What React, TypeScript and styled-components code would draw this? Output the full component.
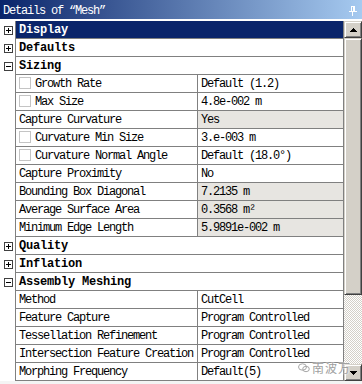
import React from "react";
import styled, { createGlobalStyle } from "styled-components";

type Item =
  | { kind: "cat"; label: string; open?: boolean; selected?: boolean }
  | { kind: "prop"; label: string; value: string; check?: boolean; readOnly?: boolean };

const items: Item[] = [
  { kind: "cat", label: "Display", selected: true },
  { kind: "cat", label: "Defaults" },
  { kind: "cat", label: "Sizing", open: true },
  { kind: "prop", label: "Growth Rate", value: "Default (1.2)", check: true },
  { kind: "prop", label: "Max Size", value: "4.8e-002 m", check: true },
  { kind: "prop", label: "Capture Curvature", value: "Yes", readOnly: true },
  { kind: "prop", label: "Curvature Min Size", value: "3.e-003 m", check: true },
  { kind: "prop", label: "Curvature Normal Angle", value: "Default (18.0°)", check: true },
  { kind: "prop", label: "Capture Proximity", value: "No" },
  { kind: "prop", label: "Bounding Box Diagonal", value: "7.2135 m", readOnly: true },
  { kind: "prop", label: "Average Surface Area", value: "0.3568 m²", readOnly: true },
  { kind: "prop", label: "Minimum Edge Length", value: "5.9891e-002 m", readOnly: true },
  { kind: "cat", label: "Quality" },
  { kind: "cat", label: "Inflation" },
  { kind: "cat", label: "Assembly Meshing", open: true },
  { kind: "prop", label: "Method", value: "CutCell" },
  { kind: "prop", label: "Feature Capture", value: "Program Controlled" },
  { kind: "prop", label: "Tessellation Refinement", value: "Program Controlled" },
  { kind: "prop", label: "Intersection Feature Creation", value: "Program Controlled" },
  { kind: "prop", label: "Morphing Frequency", value: "Default(5)" },
];

const GlobalStyle = createGlobalStyle`
  html, body {
    margin: 0;
    padding: 0;
    background: #ffffff;
  }
`;

const ExpandBox = ({ open }: { open?: boolean }) => (
  <svg width="9" height="9" viewBox="0 0 9 9">
    <rect x="0.5" y="0.5" width="8" height="8" fill="#fff" stroke="#404040" />
    <rect x="2" y="4" width="5" height="1" fill="#000" />
    {!open && <rect x="4" y="2" width="1" height="5" fill="#000" />}
  </svg>
);

const PinIcon = () => (
  <svg width="8" height="10" viewBox="0 0 8 10" shapeRendering="crispEdges">
    <rect x="2" y="0" width="1" height="5" fill="#fff" />
    <rect x="2" y="0" width="4" height="1" fill="#fff" />
    <rect x="4" y="0" width="2" height="5" fill="#fff" />
    <rect x="0" y="5" width="8" height="1" fill="#fff" />
    <rect x="3" y="6" width="1" height="4" fill="#fff" />
  </svg>
);

const Arrow = ({ down }: { down?: boolean }) => (
  <svg width="7" height="4" viewBox="0 0 7 4" shapeRendering="crispEdges">
    <polygon points={down ? "0,0 7,0 3.5,4" : "3.5,0 7,4 0,4"} fill="#000" />
  </svg>
);

export default function App() {
  return (
    <>
      <GlobalStyle />
      <Panel>
        <TitleBar>
          <span>Details of “Mesh”</span>
          <PinIcon />
        </TitleBar>
        <Body>
          <Grid>
            {items.map((it) => (
              <Row key={it.label}>
                <Gutter>{it.kind === "cat" && <ExpandBox open={it.open} />}</Gutter>
                {it.kind === "cat" ? (
                  <CategoryCell $selected={it.selected}>{it.label}</CategoryCell>
                ) : (
                  <>
                    <NameCell>
                      {it.check && <CheckBox />}
                      {it.label}
                    </NameCell>
                    <ValueCell $readOnly={it.readOnly}>{it.value}</ValueCell>
                  </>
                )}
              </Row>
            ))}
          </Grid>
          <ScrollBar>
            <ScrollButton>
              <Arrow />
            </ScrollButton>
            <Thumb />
            <Track />
            <ScrollButton>
              <Arrow down />
            </ScrollButton>
          </ScrollBar>
        </Body>
        <Watermark>
          <svg width="12" height="10" viewBox="0 0 12 10">
            <ellipse cx="4.5" cy="4" rx="4" ry="3.2" fill="none" stroke="#a8a8a8" />
            <ellipse cx="8" cy="6" rx="3.3" ry="2.7" fill="none" stroke="#a8a8a8" />
          </svg>
          南波万
        </Watermark>
      </Panel>
    </>
  );
}

const Panel = styled.div`
  position: relative;
  width: 362px;
  height: 384px;
  overflow: hidden;
  background: #f4f4f4;
  font-family: "Liberation Mono", "Noto Sans CJK SC", monospace;
  font-size: 12px;
  letter-spacing: -1.2px;
  color: #000;
`;

const TitleBar = styled.div`
  height: 19px;
  display: flex;
  align-items: center;
  justify-content: space-between;
  padding: 2px 5px 0 3px;
  box-sizing: border-box;
  background: linear-gradient(to right, #0a246a, #a6caf0);
  color: #fff;
`;

const Body = styled.div`
  display: flex;
  padding-top: 2px;
  background: #fff;
`;

const Grid = styled.div`
  width: 343px;
  border-right: 1px solid #808080;
  display: flex;
  flex-direction: column;
`;

const Row = styled.div`
  display: flex;
  height: 18px;
`;

const Gutter = styled.div`
  width: 16px;
  flex: none;
  border-right: 1px solid #808080;
  display: flex;
  align-items: center;
  justify-content: center;
  padding-left: 1px;
  box-sizing: border-box;
  background: #fff;
`;

const Cell = styled.div`
  box-sizing: border-box;
  height: 18px;
  border-bottom: 1px solid #808080;
  padding: 2px 0 0 3px;
  line-height: 15px;
  white-space: nowrap;
  overflow: hidden;
  display: flex;
  align-items: flex-start;
`;

const CategoryCell = styled(Cell)<{ $selected?: boolean }>`
  flex: 1;
  font-weight: bold;
  letter-spacing: -0.2px;
  background: ${(p) => (p.$selected ? "#0a246a" : "#fff")};
  color: ${(p) => (p.$selected ? "#fff" : "#000")};
`;

const NameCell = styled(Cell)`
  width: 182px;
  flex: none;
  border-right: 1px solid #808080;
`;

const ValueCell = styled(Cell)<{ $readOnly?: boolean }>`
  flex: 1;
  background: ${(p) => (p.$readOnly ? "#e7e5e1" : "#fff")};
`;

const CheckBox = styled.span`
  width: 10px;
  height: 10px;
  margin: 0 4px 0 0;
  border: 1px solid #c4c4c4;
  background: #fff;
  flex: none;
`;

const ScrollBar = styled.div`
  width: 18px;
  display: flex;
  flex-direction: column;
  background: repeating-conic-gradient(#d4d0c8 0 25%, #ffffff 0 50%) 0 0 / 2px 2px;
`;

const Raised = styled.div`
  box-sizing: border-box;
  background: #d4d0c8;
  border-top: 1px solid #d4d0c8;
  border-left: 1px solid #d4d0c8;
  border-right: 1px solid #404040;
  border-bottom: 1px solid #404040;
  box-shadow: inset 1px 1px 0 #fff, inset -1px -1px 0 #808080;
`;

const ScrollButton = styled(Raised)`
  height: 17px;
  display: flex;
  align-items: center;
  justify-content: center;
`;

const Thumb = styled(Raised)`
  height: 257px;
`;

const Track = styled.div`
  flex: 1;
`;

const Watermark = styled.div`
  position: absolute;
  left: 298px;
  top: 359px;
  display: flex;
  align-items: center;
  gap: 2px;
  font-family: "Noto Sans CJK SC", sans-serif;
  font-size: 12px;
  letter-spacing: 1px;
  color: #a0a0a0;
  text-shadow: 0 0 2px #fff, 0 0 2px #fff;
`;
